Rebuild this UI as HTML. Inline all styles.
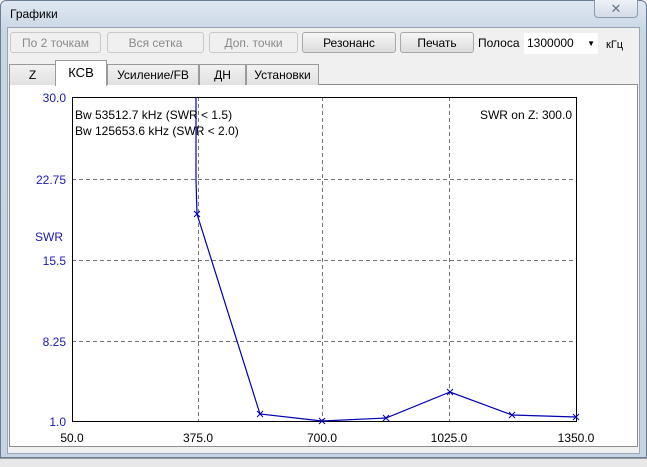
<!DOCTYPE html>
<html><head><style>
body{margin:0;width:647px;height:466px;overflow:hidden;background:#fff;font-family:"Liberation Sans",sans-serif;font-size:12px;position:relative}
.a{position:absolute}
.btn{position:absolute;top:32px;height:21px;border:1px solid #a8a8a8;border-radius:3px;background:linear-gradient(#f6f6f6,#dcdcdc);text-align:center;line-height:21px;font-size:12px;color:#000;box-sizing:border-box}
.dis{color:#8a8a8a;border-color:#c8c8c8;background:#f0f0f0}
.tab{position:absolute;top:64px;height:21px;border:1px solid #9a9a9a;border-bottom:none;background:linear-gradient(#f2f2f2,#e0e0e0);text-align:center;line-height:20px;box-sizing:border-box}
</style></head><body>
<div class="a" style="left:0;top:0;width:647px;height:458px;background:linear-gradient(#dfe8f2,#c9d6e4 30px,#c5d3e2);border:1px solid #6b7d93;border-radius:6px 6px 0 0;box-sizing:border-box"></div>
<div class="a" style="left:10px;top:7px;font-size:12px">Графики</div>
<div class="a" style="left:594px;top:0;width:44px;height:18px;border:1px solid #8a99ad;border-top:none;border-radius:0 0 4px 4px;background:linear-gradient(#eef2f7,#d3dce8);box-sizing:border-box;text-align:center;color:#6a7484;font-size:13px;line-height:17px">✕</div>
<div class="a" style="left:7px;top:27px;width:633px;height:427px;background:#f0f0f0;border:1px solid #97a6b8;box-sizing:border-box"></div>
<div class="btn dis" style="left:10px;width:91px">По 2 точкам</div>
<div class="btn dis" style="left:107px;width:97px">Вся сетка</div>
<div class="btn dis" style="left:209px;width:89px">Доп. точки</div>
<div class="btn" style="left:302px;width:94px">Резонанс</div>
<div class="btn" style="left:400px;width:74px">Печать</div>
<div class="a" style="left:478px;top:36px;font-size:12px;white-space:nowrap">Полоса</div>
<div class="a" style="left:524px;top:33px;width:74px;height:21px;background:#fff;line-height:21px;padding-left:3px;box-sizing:border-box">1300000<span style="position:absolute;right:3px;top:0;font-size:8px">▼</span></div>
<div class="a" style="left:606px;top:39px;font-size:11px">кГц</div>
<div class="a" style="left:9px;top:84px;width:629px;height:363px;background:#fff;border:1px solid #8e8e8e;box-sizing:border-box"></div>
<div class="tab" style="left:9px;width:47px">Z</div>
<div class="tab" style="left:107px;width:92px">Усиление/FB</div>
<div class="tab" style="left:199px;width:47px">ДН</div>
<div class="tab" style="left:246px;width:73px">Установки</div>
<div class="tab" style="left:55px;top:60px;height:26px;width:52px;background:#fff;line-height:24px;font-size:13px">КСВ</div>
<svg class="a" style="left:0;top:0" width="647" height="466">
<g stroke="#777" stroke-dasharray="4,3" stroke-width="1">
<line x1="198.5" y1="97" x2="198.5" y2="421"/><line x1="322.5" y1="97" x2="322.5" y2="421"/><line x1="449.5" y1="97" x2="449.5" y2="421"/>
<line x1="72" y1="179.5" x2="576" y2="179.5"/><line x1="72" y1="260.5" x2="576" y2="260.5"/><line x1="72" y1="341.5" x2="576" y2="341.5"/>
</g>
<rect x="72.5" y="97.5" width="504" height="324" fill="none" stroke="#000"/>
<polyline fill="none" stroke="#0000b0" stroke-width="1.2" points="196,97 196,180 197,214 260,414 322,421 386,418 450,392 512,415 576,417"/>
<g stroke="#0000b0" stroke-width="1">
<path d="M194,211l6,6M200,211l-6,6M257,411l6,6M263,411l-6,6M319,418l6,6M325,418l-6,6M383,415l6,6M389,415l-6,6M447,389l6,6M453,389l-6,6M509,412l6,6M515,412l-6,6M573,414l6,6M579,414l-6,6"/>
</g>
<g fill="#1a1ab0" font-family="Liberation Sans" font-size="12" text-anchor="end">
<text x="66" y="102">30.0</text><text x="66" y="184">22.75</text><text x="66" y="265">15.5</text><text x="66" y="346">8.25</text><text x="66" y="426">1.0</text>
<text x="63" y="241">SWR</text>
</g>
<g fill="#000" font-family="Liberation Sans" font-size="12" text-anchor="middle">
<text x="72" y="442">50.0</text><text x="198" y="442">375.0</text><text x="322" y="442">700.0</text><text x="449" y="442">1025.0</text><text x="576" y="442">1350.0</text>
</g>
<g fill="#000" font-family="Liberation Sans" font-size="12">
<text x="75" y="119">Bw 53512.7 kHz (SWR &lt; 1.5)</text>
<text x="75" y="135">Bw 125653.6 kHz (SWR &lt; 2.0)</text>
<text x="572" y="119" text-anchor="end">SWR on Z: 300.0</text>
</g>
</svg>
<div class="a" style="left:0;top:458px;width:647px;height:8px;background:#e8e8e8;border-top:1px solid #999"></div>
</body></html>
